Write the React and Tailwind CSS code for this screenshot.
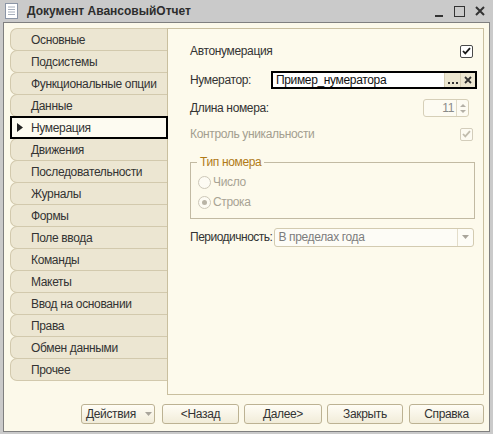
import React from 'react';

const tabs = [
  'Основные',
  'Подсистемы',
  'Функциональные опции',
  'Данные',
  'Нумерация',
  'Движения',
  'Последовательности',
  'Журналы',
  'Формы',
  'Поле ввода',
  'Команды',
  'Макеты',
  'Ввод на основании',
  'Права',
  'Обмен данными',
  'Прочее',
];

const DocIcon = () => (
  <svg width="13" height="16" viewBox="0 0 13 16">
    <rect x="0.5" y="0.5" width="12" height="15" fill="#fff" stroke="#8c96a6" />
    <path d="M3 4h7M3 6.5h7M3 9h7M3 11.5h7" stroke="#a8b0bc" strokeWidth="1" />
  </svg>
);

const CheckBox = ({ disabled }) => (
  <div
    className={`w-[13px] h-[13px] rounded-[2px] border flex items-center justify-center ${
      disabled ? 'border-[#d3cdbb] bg-[#fdfbf2]' : 'border-[#4a4a4a] bg-white'
    }`}
  >
    <svg width="9" height="8" viewBox="0 0 9 8">
      <path
        d="M1 4l2.3 2.4L8 1.2"
        fill="none"
        stroke={disabled ? '#c2bdae' : '#1a1a1a'}
        strokeWidth="1.8"
      />
    </svg>
  </div>
);

const Radio = ({ checked, label }) => (
  <div className="flex items-center h-[18px] text-[#a8a394]">
    <div className="w-[13px] h-[13px] rounded-full border border-[#cdc8b8] bg-[#fdfbf3] flex items-center justify-center">
      {checked && <div className="w-[5px] h-[5px] rounded-full bg-[#b9b4a6]" />}
    </div>
    <span className="ml-[2px]">{label}</span>
  </div>
);

const Button = ({ children, className = '' }) => (
  <div
    className={`h-[20px] rounded-[3px] border border-[#bcb293] bg-gradient-to-b from-[#fffdf5] to-[#f1ecd9] flex items-center justify-center text-[#333] ${className}`}
  >
    {children}
  </div>
);

export default function App() {
  return (
    <div className="w-[493px] h-[434px] bg-[#cacaca] flex flex-col font-['Liberation_Sans',Arial,sans-serif] text-[12px] tracking-[-0.35px] text-[#333] overflow-hidden">
      {/* Title bar */}
      <div className="h-[22px] flex items-center pl-[5px]">
        <DocIcon />
        <span className="ml-[9px] font-bold text-[#2d2d2d] text-[12px] tracking-normal">
          Документ АвансовыйОтчет
        </span>
        <div className="ml-auto flex items-center h-full">
          <div className="w-[8px] h-[2px] bg-[#333] mt-[10px]" />
          <div className="ml-[11px] w-[11px] h-[11px] border-[1.5px] border-[#333]" />
          <svg className="ml-[10px] mr-[8px]" width="10" height="10" viewBox="0 0 10 10">
            <path d="M1 1l8 8M9 1l-8 8" stroke="#333" strokeWidth="2" />
          </svg>
        </div>
      </div>

      {/* Window body */}
      <div className="mx-[3px] mb-[2px] flex-1 border border-[#7f7f7f] bg-[#fcf9ea] flex flex-col pl-[6px] pr-[5px] pt-[5px]">
        <div className="flex h-[367px]">
          {/* Tabs */}
          <div className="w-[157px] flex flex-col">
            {tabs.map((t, i) =>
              t === 'Нумерация' ? (
                <div
                  key={t}
                  className="-mt-px h-[23px] border-2 border-black bg-[#fdfbf1] flex items-center relative z-10 mr-[-1px]"
                >
                  <svg className="ml-[5px]" width="6" height="9" viewBox="0 0 6 9">
                    <path d="M0 0l6 4.5L0 9z" fill="#222" />
                  </svg>
                  <span className="ml-[8px]">{t}</span>
                </div>
              ) : (
                <div
                  key={t}
                  className={`${i === 0 ? '' : '-mt-px'} h-[23px] border border-r-0 border-[#d2c9ad] rounded-l-[7px] bg-[#ece6d2] flex items-center pl-[20px]`}
                >
                  {t}
                </div>
              )
            )}
          </div>

          {/* Content */}
          <div className="flex-1 border border-[#c9bf9f] bg-[#fdfaec] flex flex-col pl-[22px] pr-[9px] pt-[13px]">
            <div className="flex items-center justify-between h-[18px]">
              <span>Автонумерация</span>
              <div className="mr-px">
                <CheckBox />
              </div>
            </div>

            <div className="flex items-center h-[18px] mt-[11px]">
              <span className="w-[83px] shrink-0">Нумератор:</span>
              <div className="flex-1 h-[18px] -ml-[2px] -mr-[3px] border-2 border-black bg-white flex items-stretch">
                <span className="flex-1 pl-[3px] text-[#111] leading-[14px]">Пример_нумератора</span>
                <div className="w-[16px] bg-[#ece6d0] border-l border-[#d6ceb4] flex items-end justify-center pb-[3px]">
                  <div className="flex gap-[2px]">
                    <div className="w-[2px] h-[2px] bg-[#333]" />
                    <div className="w-[2px] h-[2px] bg-[#333]" />
                    <div className="w-[2px] h-[2px] bg-[#333]" />
                  </div>
                </div>
                <div className="w-[15px] bg-[#ece6d0] border-l border-[#d6ceb4] flex items-center justify-center">
                  <svg width="8" height="8" viewBox="0 0 8 8">
                    <path d="M1 1l6 6M7 1l-6 6" stroke="#333" strokeWidth="1.8" />
                  </svg>
                </div>
              </div>
            </div>

            <div className="flex items-center justify-between h-[18px] mt-[10px]">
              <span>Длина номера:</span>
              <div className="w-[46px] h-[18px] mr-[5px] rounded-[3px] border border-[#d6cfb8] bg-[#fdfbf2] flex items-stretch">
                <span className="flex-1 text-right pr-[2px] text-[#8a8a8a] leading-[16px]">11</span>
                <div className="w-[12px] border-l border-[#e0dac6] flex flex-col items-center justify-center gap-[3px]">
                  <svg width="6" height="3" viewBox="0 0 6 3">
                    <path d="M0 3l3-3 3 3z" fill="#b4b0a6" />
                  </svg>
                  <svg width="6" height="3" viewBox="0 0 6 3">
                    <path d="M0 0l3 3 3-3z" fill="#b4b0a6" />
                  </svg>
                </div>
              </div>
            </div>

            <div className="flex items-center justify-between h-[18px] mt-[8px] text-[#a39e8f]">
              <span>Контроль уникальности</span>
              <div className="mr-px">
                <CheckBox disabled />
              </div>
            </div>

            {/* Fieldset */}
            <div className="relative mt-[19px] h-[57px] border border-[#c2baa3] -mr-px">
              <div className="absolute -top-[8px] left-[6px] px-[3px] bg-[#fdfaec] text-[#b07a18] leading-[14px]">
                Тип номера
              </div>
              <div className="pl-[7px] pt-[10px] flex flex-col gap-[2px]">
                <Radio label="Число" />
                <Radio label="Строка" checked />
              </div>
            </div>

            <div className="flex items-center h-[18px] mt-[9px]">
              <span className="shrink-0 whitespace-nowrap pr-[2px] tracking-[-0.5px]">Периодичность:</span>
              <div className="flex-1 h-[19px] rounded-[3px] border border-[#d3cbb1] bg-[#fdfcf6] flex items-stretch">
                <span className="flex-1 pl-[3px] text-[#7c7c7c] leading-[17px]">В пределах года</span>
                <div className="w-[16px] border-l border-[#e3ddca] flex items-center justify-center">
                  <svg width="7" height="4" viewBox="0 0 7 4">
                    <path d="M0 0h7L3.5 4z" fill="#a9a59b" />
                  </svg>
                </div>
              </div>
            </div>
          </div>
        </div>

        {/* Buttons */}
        <div className="flex mt-[9px]">
          <Button className="ml-[71px] w-[74px] justify-start pl-[4px]">
            <span>Действия</span>
            <svg className="ml-[9px]" width="7" height="4" viewBox="0 0 7 4">
              <path d="M0 0h7L3.5 4z" fill="#a9a59b" />
            </svg>
          </Button>
          <Button className="ml-[7px] w-[77px]">&lt;Назад</Button>
          <Button className="ml-[5px] w-[78px]">Далее&gt;</Button>
          <Button className="ml-[5px] w-[76px]">Закрыть</Button>
          <Button className="ml-[6px] w-[75px]">Справка</Button>
        </div>
      </div>
    </div>
  );
}
